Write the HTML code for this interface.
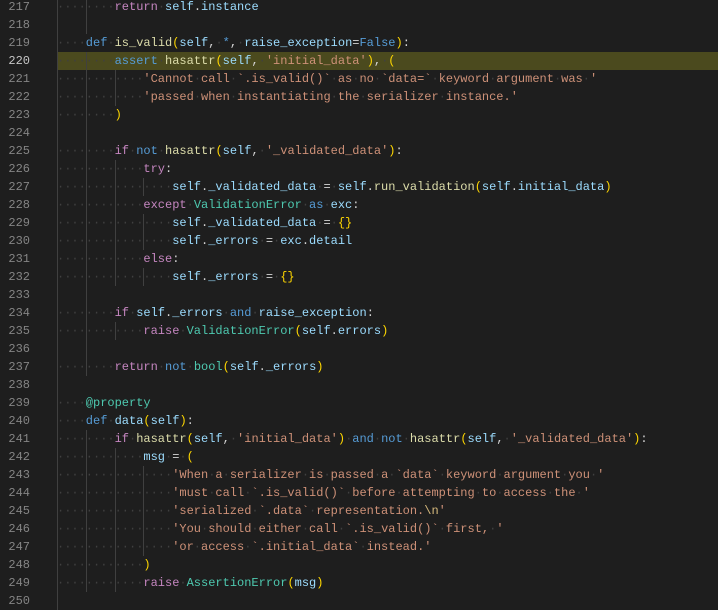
<!DOCTYPE html>
<html><head><meta charset="utf-8">
<style>
html,body{margin:0;padding:0;background:#1e1e1e;width:718px;height:604px;overflow:hidden}
#ed{position:absolute;top:-2px;left:0;width:718px;font:12px/18px "Liberation Mono","DejaVu Sans Mono",monospace;color:#d4d4d4}
.l{height:18px;white-space:pre;position:relative}
.l b{display:inline-block;width:30px;text-align:right;color:#858585;font-weight:normal}
.l .c{position:absolute;left:57px;top:0;right:0;height:18px}
.cur .c{background:#4b4a1e}
.cur b{color:#c6c6c6}
.g{display:inline-block;width:28.8px;box-shadow:inset 1px 0 0 #404040;height:18px;vertical-align:top}
.d{color:#404040}
.k{color:#569cd6}.p{color:#c586c0}.v{color:#9cdcfe}.f{color:#dcdcaa}.s{color:#ce9178}.t{color:#4ec9b0}.y{color:#ffd700}.e{color:#d7ba7d}
</style></head><body>
<div id="ed">
<div class="l"><b>217</b><span class="c">        <span class="p">return</span> <span class="v">self</span>.<span class="v">instance</span></span></div>
<div class="l"><b>218</b><span class="c x">        </span></div>
<div class="l"><b>219</b><span class="c">    <span class="k">def</span> <span class="f">is_valid</span><span class="y">(</span><span class="v">self</span>, <span class="k">*</span>, <span class="v">raise_exception</span>=<span class="k">False</span><span class="y">)</span>:</span></div>
<div class="l cur"><b>220</b><span class="c">        <span class="k">assert</span> <span class="f">hasattr</span><span class="y">(</span><span class="v">self</span>, <span class="s">'initial_data'</span><span class="y">)</span>, <span class="y">(</span></span></div>
<div class="l"><b>221</b><span class="c">            <span class="s">'Cannot call `.is_valid()` as no `data=` keyword argument was '</span></span></div>
<div class="l"><b>222</b><span class="c">            <span class="s">'passed when instantiating the serializer instance.'</span></span></div>
<div class="l"><b>223</b><span class="c">        <span class="y">)</span></span></div>
<div class="l"><b>224</b><span class="c x">        </span></div>
<div class="l"><b>225</b><span class="c">        <span class="p">if</span> <span class="k">not</span> <span class="f">hasattr</span><span class="y">(</span><span class="v">self</span>, <span class="s">'_validated_data'</span><span class="y">)</span>:</span></div>
<div class="l"><b>226</b><span class="c">            <span class="p">try</span>:</span></div>
<div class="l"><b>227</b><span class="c">                <span class="v">self</span>.<span class="v">_validated_data</span> = <span class="v">self</span>.<span class="f">run_validation</span><span class="y">(</span><span class="v">self</span>.<span class="v">initial_data</span><span class="y">)</span></span></div>
<div class="l"><b>228</b><span class="c">            <span class="p">except</span> <span class="t">ValidationError</span> <span class="k">as</span> <span class="v">exc</span>:</span></div>
<div class="l"><b>229</b><span class="c">                <span class="v">self</span>.<span class="v">_validated_data</span> = <span class="y">{}</span></span></div>
<div class="l"><b>230</b><span class="c">                <span class="v">self</span>.<span class="v">_errors</span> = <span class="v">exc</span>.<span class="v">detail</span></span></div>
<div class="l"><b>231</b><span class="c">            <span class="p">else</span>:</span></div>
<div class="l"><b>232</b><span class="c">                <span class="v">self</span>.<span class="v">_errors</span> = <span class="y">{}</span></span></div>
<div class="l"><b>233</b><span class="c x">        </span></div>
<div class="l"><b>234</b><span class="c">        <span class="p">if</span> <span class="v">self</span>.<span class="v">_errors</span> <span class="k">and</span> <span class="v">raise_exception</span>:</span></div>
<div class="l"><b>235</b><span class="c">            <span class="p">raise</span> <span class="t">ValidationError</span><span class="y">(</span><span class="v">self</span>.<span class="v">errors</span><span class="y">)</span></span></div>
<div class="l"><b>236</b><span class="c x">        </span></div>
<div class="l"><b>237</b><span class="c">        <span class="p">return</span> <span class="k">not</span> <span class="t">bool</span><span class="y">(</span><span class="v">self</span>.<span class="v">_errors</span><span class="y">)</span></span></div>
<div class="l"><b>238</b><span class="c x">    </span></div>
<div class="l"><b>239</b><span class="c">    <span class="t">@property</span></span></div>
<div class="l"><b>240</b><span class="c">    <span class="k">def</span> <span class="v">data</span><span class="y">(</span><span class="v">self</span><span class="y">)</span>:</span></div>
<div class="l"><b>241</b><span class="c">        <span class="p">if</span> <span class="f">hasattr</span><span class="y">(</span><span class="v">self</span>, <span class="s">'initial_data'</span><span class="y">)</span> <span class="k">and</span> <span class="k">not</span> <span class="f">hasattr</span><span class="y">(</span><span class="v">self</span>, <span class="s">'_validated_data'</span><span class="y">)</span>:</span></div>
<div class="l"><b>242</b><span class="c">            <span class="v">msg</span> = <span class="y">(</span></span></div>
<div class="l"><b>243</b><span class="c">                <span class="s">'When a serializer is passed a `data` keyword argument you '</span></span></div>
<div class="l"><b>244</b><span class="c">                <span class="s">'must call `.is_valid()` before attempting to access the '</span></span></div>
<div class="l"><b>245</b><span class="c">                <span class="s">'serialized `.data` representation.</span><span class="e">\n</span><span class="s">'</span></span></div>
<div class="l"><b>246</b><span class="c">                <span class="s">'You should either call `.is_valid()` first, '</span></span></div>
<div class="l"><b>247</b><span class="c">                <span class="s">'or access `.initial_data` instead.'</span></span></div>
<div class="l"><b>248</b><span class="c">            <span class="y">)</span></span></div>
<div class="l"><b>249</b><span class="c">            <span class="p">raise</span> <span class="t">AssertionError</span><span class="y">(</span><span class="v">msg</span><span class="y">)</span></span></div>
<div class="l"><b>250</b><span class="c x">    </span></div>
</div>
<script>
document.querySelectorAll('.c').forEach(function(c){
  var empty=c.classList.contains('x');
  var first=c.firstChild;
  if(first&&first.nodeType===3){
    var m=first.nodeValue.match(/^ */)[0].length;
    var rest=first.nodeValue.slice(m);
    var frag=document.createDocumentFragment();
    for(var i=0;i<m;i+=4){
      var g=document.createElement('span');g.className='g';
      if(!empty){g.innerHTML='<span class="d">····</span>';}
      frag.appendChild(g);
    }
    if(rest){frag.appendChild(document.createTextNode(rest));}
    c.replaceChild(frag,first);
  }
  var w=document.createTreeWalker(c,NodeFilter.SHOW_TEXT,null,false),ns=[],n;
  while(n=w.nextNode()){if(n.parentNode.className!=='d'&&n.nodeValue.indexOf(' ')>=0)ns.push(n);}
  ns.forEach(function(t){
    var parts=t.nodeValue.split(' '),f=document.createDocumentFragment();
    parts.forEach(function(p,i){
      if(i>0){var s=document.createElement('span');s.className='d';s.textContent='·';f.appendChild(s);}
      if(p)f.appendChild(document.createTextNode(p));
    });
    t.parentNode.replaceChild(f,t);
  });
});
</script>
</body></html>
